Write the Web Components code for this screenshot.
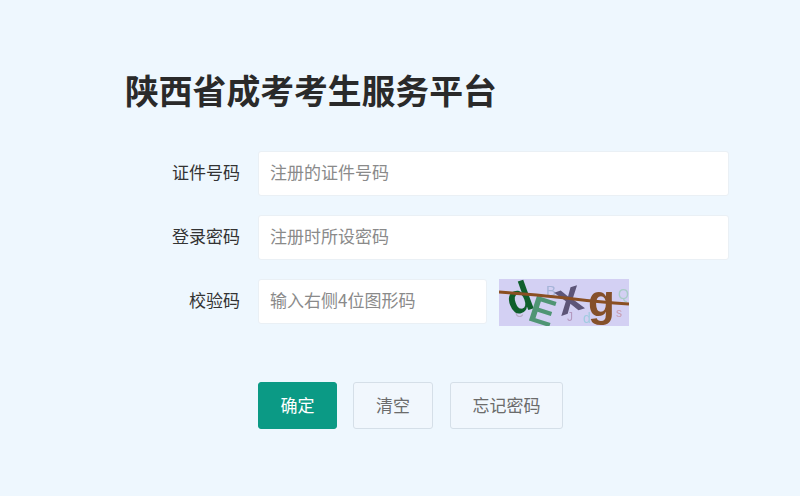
<!DOCTYPE html>
<html lang="zh">
<head>
<meta charset="utf-8">
<title>陕西省成考考生服务平台</title>
<style>
  html, body { margin: 0; height: 100%; overflow: hidden; background: #eef7fe; }
  body { font-family: "Noto Sans CJK SC", "Liberation Sans", sans-serif; }
</style>
</head>
<body>
<login-page>
  <form-row label="证件号码"><text-box placeholder="注册的证件号码"></text-box></form-row>
  <form-row label="登录密码"><text-box placeholder="注册时所设密码"></text-box></form-row>
  <form-row label="校验码">
    <text-box placeholder="输入右侧4位图形码" style="flex:0 0 229px"></text-box>
    <captcha-image></captcha-image>
  </form-row>
  <action-button slot="actions" kind="primary" style="width:79px">确定</action-button>
  <action-button slot="actions" style="width:80px">清空</action-button>
  <action-button slot="actions" style="width:113px;margin-left:1px">忘记密码</action-button>
</login-page>

<script>
class LoginPage extends HTMLElement {
  connectedCallback() {
    this.attachShadow({ mode: 'open' });
    this.shadowRoot.innerHTML = `
      <style>
        :host { display: block; padding: 64px 71px 0 125px; color: #2b2b2b; }
        h1 { margin: 0 0 35px; font-size: 33.8px; line-height: 52px; font-weight: 700; color: #2a2a2a; }
        .rows { display: flex; flex-direction: column; gap: 19px; }
        .actions { display: flex; gap: 16px; margin: 56px 0 0 133px; }
      </style>
      <h1>陕西省成考考生服务平台</h1>
      <div class="rows"><slot></slot></div>
      <div class="actions"><slot name="actions"></slot></div>
    `;
  }
}

class FormRow extends HTMLElement {
  connectedCallback() {
    this.attachShadow({ mode: 'open' });
    this.shadowRoot.innerHTML = `
      <style>
        :host { display: flex; align-items: flex-start; }
        label { flex: 0 0 133px; padding-right: 18px; box-sizing: border-box; text-align: right; font-size: 17px; line-height: 42px; color: #333; }
        .field { flex: 1; display: flex; gap: 12px; min-width: 0; }
      </style>
      <label>${this.getAttribute('label')}</label>
      <div class="field"><slot></slot></div>
    `;
  }
}

class TextBox extends HTMLElement {
  connectedCallback() {
    this.attachShadow({ mode: 'open' });
    this.shadowRoot.innerHTML = `
      <style>
        :host { display: block; flex: 1; min-width: 0; }
        input {
          display: block; width: 100%; height: 45px; box-sizing: border-box;
          padding: 0 11px 5px; border: 1px solid #eaf0f5; border-radius: 3px;
          background: #fff; outline: none; font: 17px "Noto Sans CJK SC", "Liberation Sans", sans-serif; color: #333;
        }
        input::placeholder { color: #8a8a8a; opacity: 1; }
      </style>
      <input type="text" placeholder="${this.getAttribute('placeholder')}">
    `;
  }
}

class CaptchaImage extends HTMLElement {
  connectedCallback() {
    this.attachShadow({ mode: 'open' });
    this.shadowRoot.innerHTML = `
      <style>
        :host { display: block; flex: 0 0 130px; height: 47px; overflow: hidden; }
        svg { display: block; filter: blur(.6px); }
        text { font-family: "Liberation Sans", sans-serif; }
      </style>
      <svg width="130" height="47" viewBox="0 0 130 47">
        <rect width="130" height="47" fill="#d3d0f3"/>
        <text x="47" y="17" font-size="15" fill="#a6b4d8">B</text>
        <text x="119" y="20" font-size="14" fill="#a9ccc8">Q</text>
        <text x="84" y="44" font-size="14" fill="#a2cbe0">d</text>
        <text x="16" y="38" font-size="12" fill="#b7a9c4">C</text>
        <text x="68" y="42" font-size="12" fill="#b49ac0">J</text>
        <text x="117" y="38" font-size="12" fill="#c79aae">s</text>
        <text x="57" y="33" font-size="46" font-weight="700" fill="#5d5578" transform="rotate(-18 72 19)">x</text>
        <text x="8" y="33" font-size="42" font-weight="700" fill="#0f5f2c" transform="rotate(-20 22 20)">d</text>
        <text x="31" y="46" font-size="38" font-weight="700" fill="#4f9574" transform="rotate(18 46 32)">E</text>
        <path d="M0 13 Q50 17 75 20 T130 25" fill="none" stroke="#8a4f22" stroke-width="3"/>
        <text x="89" y="37" font-size="44" font-weight="700" fill="#85502a">g</text>
      </svg>
    `;
  }
}

class ActionButton extends HTMLElement {
  connectedCallback() {
    this.attachShadow({ mode: 'open' });
    const primary = this.getAttribute('kind') === 'primary';
    this.shadowRoot.innerHTML = `
      <style>
        :host { display: block; }
        button {
          display: block; width: 100%; height: 47px; padding: 0 0 3px; box-sizing: border-box;
          border: 1px solid ${primary ? '#0b9a85' : '#d5dfe8'}; border-radius: 3px;
          background: ${primary ? '#0b9a85' : '#f1f7fd'}; color: ${primary ? '#fff' : '#6b6b6b'};
          font: 17px "Noto Sans CJK SC", "Liberation Sans", sans-serif;
        }
      </style>
      <button type="button"><slot></slot></button>
    `;
  }
}

customElements.define('login-page', LoginPage);
customElements.define('form-row', FormRow);
customElements.define('text-box', TextBox);
customElements.define('captcha-image', CaptchaImage);
customElements.define('action-button', ActionButton);
</script>
</body>
</html>
